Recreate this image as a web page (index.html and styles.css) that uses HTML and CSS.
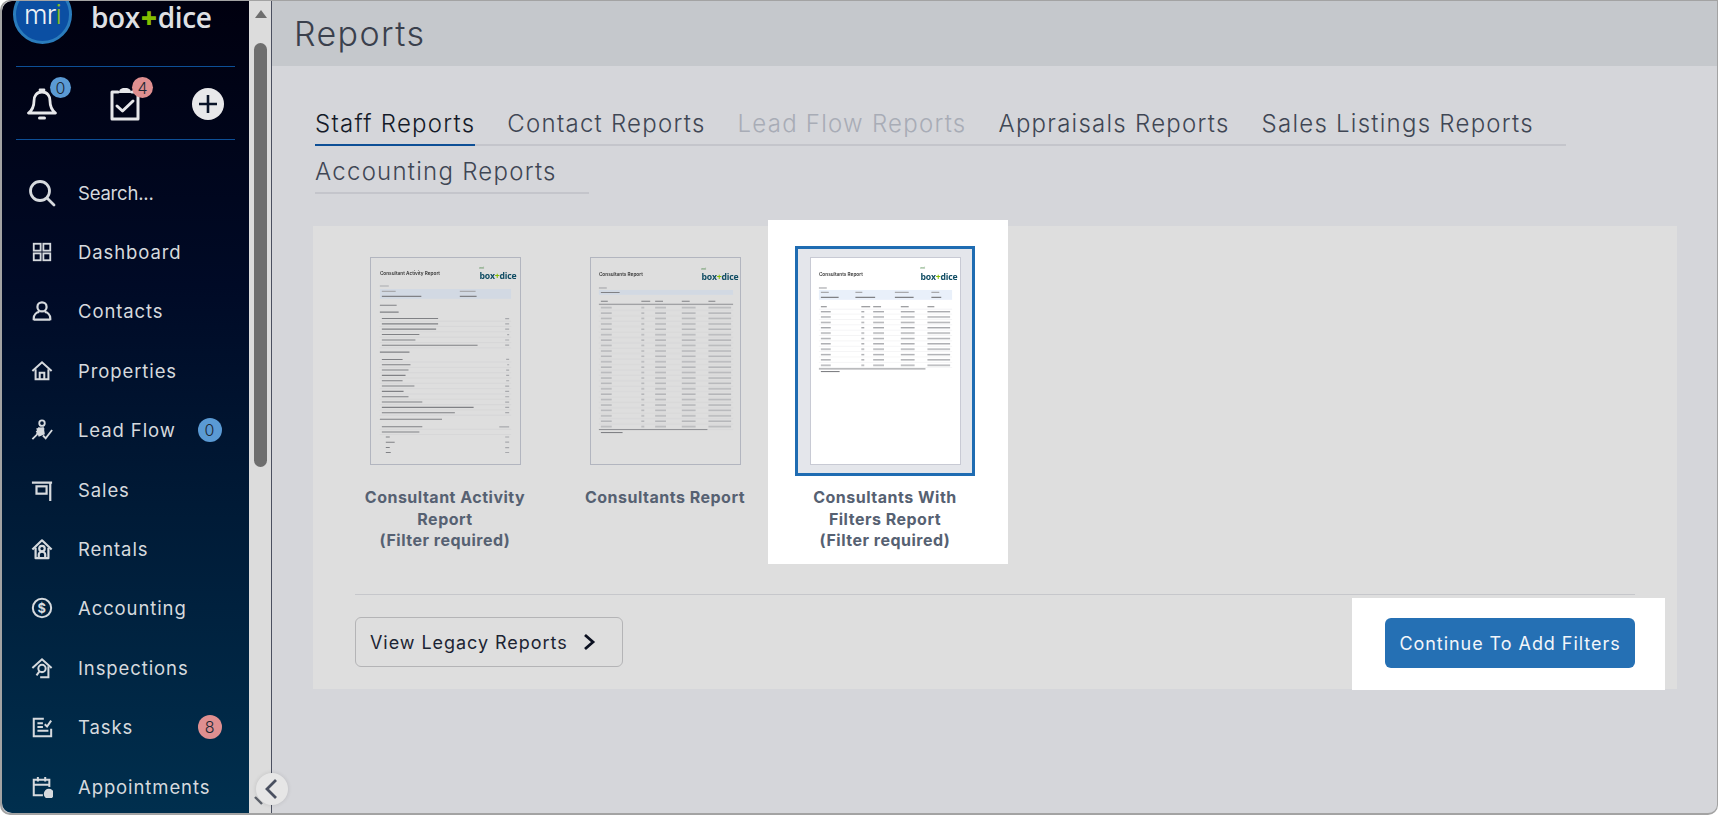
FILE: index.html
```html
<!DOCTYPE html>
<html lang="en">
<head>
    <meta charset="UTF-8">
    <title>Reports</title>
    <link rel="stylesheet" href="styles.css">
</head>
<body>
<div class="app">

    <aside class="sidebar">
        <div class="brand">
            <div class="brand-mark">m<span class="brand-r">r</span><span class="brand-i">i</span></div>
            <div class="brand-name">box<span class="plus">+</span>dice</div>
        </div>

        <div class="quick">
            <div class="quick-item">
                <svg class="quick-icon" viewBox="0 0 32 34" fill="none" stroke="currentColor" stroke-width="2.8" stroke-linejoin="round" stroke-linecap="round"><path d="M15 5c-5.500 0-8 4-8 9 0 6-1.500 9-5.500 12h27c-4-3-5.500-6-5.500-12 0-5-2.500-9-8-9z"/><path d="M13 3h4"/><path d="M12.500 31h5" stroke-width="3"/></svg>
                <span class="count blue quick-count">0</span>
            </div>
            <div class="quick-item">
                <svg class="quick-icon" viewBox="0 0 32 34" fill="none" stroke="currentColor" stroke-width="3" stroke-linejoin="round" stroke-linecap="round"><path d="M9 5H3v27h26V5h-6"/><path d="M10 6c0-5 4-5 6-5s6 0 6 5z" fill="currentColor" stroke="none"/><path d="M8 19l5.500 5L24 14"/></svg>
                <span class="count red quick-count">4</span>
            </div>
            <div class="add-circle">
                <svg viewBox="0 0 32 32" fill="none" stroke="#0a1428" stroke-width="2.600"><path d="M16 7v18M7 16h18"/></svg>
            </div>
        </div>

        <nav class="menu">
            <a class="menu-item search-item">
                <svg class="menu-icon search-icon" viewBox="0 0 28 28" fill="none" stroke="currentColor" stroke-width="2.800" stroke-linecap="round"><circle cx="12" cy="12" r="9.500"/><path d="M19 19l7 7"/></svg>
                Search...
            </a>
            <a class="menu-item">
                <svg class="menu-icon" viewBox="0 0 24 24" fill="none" stroke="currentColor" stroke-width="2"><rect x="3" y="3" width="7.500" height="7.500"/><rect x="13.500" y="3" width="7.500" height="7.500"/><rect x="3" y="13.500" width="7.500" height="7.500"/><rect x="13.500" y="13.500" width="7.500" height="7.500"/></svg>
                Dashboard
            </a>
            <a class="menu-item">
                <svg class="menu-icon" viewBox="0 0 24 24" fill="none" stroke="currentColor" stroke-width="2.400"><circle cx="12" cy="7.500" r="5"/><path d="M3 22v-2c0-4 3-6.500 6-7M21 22v-2c0-4-3-6.500-6-7M3 21.500h18"/></svg>
                Contacts
            </a>
            <a class="menu-item">
                <svg class="menu-icon" viewBox="0 0 24 24" fill="none" stroke="currentColor" stroke-width="2.200"><path d="M1.500 12L12 2.500 22.500 12"/><path d="M5 10v11h14V10"/><path d="M9.500 21v-7h5v7"/></svg>
                Properties
            </a>
            <a class="menu-item">
                <svg class="menu-icon" viewBox="0 0 24 24" fill="none" stroke="currentColor" stroke-width="2"><circle cx="12" cy="4.500" r="3"/><path d="M1.500 22l5-5 2-7 6 1M6 13l3 4 3-1M13 18l3 3 7-9" /><path d="M7 11l6-1 1 6-5 2z" fill="currentColor"/></svg>
                Lead Flow
                <span class="count blue">0</span>
            </a>
            <a class="menu-item">
                <svg class="menu-icon" viewBox="0 0 24 24" fill="none" stroke="currentColor" stroke-width="2.400"><path d="M1 4h22M21 4v20"/><rect x="6" y="8" width="11" height="8"/></svg>
                Sales
            </a>
            <a class="menu-item">
                <svg class="menu-icon" viewBox="0 0 24 24" fill="none" stroke="currentColor" stroke-width="2.400" stroke-linejoin="round"><path d="M1.500 12.500L12 2.500l10.500 10"/><path d="M5 10.500V22h14V10.500"/><circle cx="12" cy="11.500" r="3"/><path d="M8.500 22v-4c0-1.500 1.500-3 3.500-3s3.500 1.500 3.500 3v4"/></svg>
                Rentals
            </a>
            <a class="menu-item">
                <svg class="menu-icon" viewBox="0 0 24 24"><circle cx="12" cy="12" r="10" fill="none" stroke="currentColor" stroke-width="2.200"/><text class="dollar" x="12" y="17">$</text></svg>
                Accounting
            </a>
            <a class="menu-item">
                <svg class="menu-icon" viewBox="0 0 24 24" fill="none" stroke="currentColor" stroke-width="2.200"><path d="M1.500 12L12 2.500 22.500 12"/><path d="M19 10v12H10"/><circle cx="12" cy="12.500" r="4"/><path d="M9 16l-3 4"/></svg>
                Inspections
            </a>
            <a class="menu-item">
                <svg class="menu-icon" viewBox="0 0 24 24" fill="none" stroke="currentColor" stroke-width="2.200"><path d="M14 3H3v19h19v-8"/><path d="M7 8h6M7 12h6M7 16h12"/><path d="M15 9l2.500 2.500L22 5"/></svg>
                Tasks
                <span class="count red">8</span>
            </a>
            <a class="menu-item">
                <svg class="menu-icon" viewBox="0 0 24 24" fill="none" stroke="currentColor" stroke-width="2.200"><path d="M13 21H3V4h17v8M3 9.500h17M7.500 1v5M15.500 1v5"/><circle cx="19.500" cy="19.500" r="5.500" fill="currentColor" stroke="none"/></svg>
                Appointments
            </a>
        </nav>
    </aside>

    <div class="scrollbar">
        <div class="scroll-up"></div>
        <div class="scroll-thumb"></div>
    </div>

    <main class="main">
        <header class="page-header">
            <h1>Reports</h1>
        </header>

        <div class="tabs">
            <div class="tab active"><span>Staff Reports</span></div>
            <div class="tab"><span>Contact Reports</span></div>
            <div class="tab disabled"><span>Lead Flow Reports</span></div>
            <div class="tab"><span>Appraisals Reports</span></div>
            <div class="tab"><span>Sales Listings Reports</span></div>
            <div class="tab"><span>Accounting Reports</span></div>
        </div>

        <section class="panel">
            <div class="cards">
                <div class="card">
                    <div class="thumb-box">
                        <svg class="thumb" viewBox="0 0 151 208">
                            <text class="t-title" x="9" y="16.500">Consultant Activity Report</text>
                            <text class="t-mri" x="110" y="10.500">mri</text>
                            <text class="t-logo" x="110" y="21">box<tspan class="t-plus">+</tspan>dice</text>
                            <rect x="9" y="31" width="133" height="10" fill="#d2d9e3"/>
                            <path class="bars-soft" d="M9 28h9M11 33.500h14M90 33.500h16"/>
                            <path class="bars" d="M11 38.500h40M90 38.500h17M9 47.500h17M9 54.500h19M9 95h30M9 163h63"/>
                            <path class="bars" d="M11 61h57M11 66.400h57M11 71.700h55M11 77.200h38M11 82.700h34M11 88h97M11 102.400h21M11 107.800h29M11 113.200h27M11 118.600h24M11 124h21M11 129.400h33M11 134.800h22M11 140.200h27M11 145.600h41M11 151h93M11 156.400h74M11 170.700h41M11 176h38M15 181h4M15 186.300h9M15 191.700h4M15 196.700h5"/>
                            <path class="bars-soft" d="M136 61h4M136 66.400h4M136 71.700h4M138 77.200h2M136 82.700h4M136 88h4M137 102.400h3M138 107.800h2M137 113.200h3M137 118.600h3M137 124h3M136 129.400h4M136 134.800h4M136 140.200h4M136 145.600h4M136 151h4M136 156.400h4M130 170.700h10M136 181h4M136 186.300h4M136 191.700h4M136 196.700h4"/>
                            <path class="rules" d="M9 63.700h133M9 69h133M9 74.400h133M9 79.900h133M9 85.300h133M9 90.700h133M9 105h133M9 110.400h133M9 115.800h133M9 121.200h133M9 126.600h133M9 132h133M9 137.400h133M9 142.800h133M9 148.200h133M9 153.600h133M9 159h133M9 173.300h133M9 178.500h133"/>
                        </svg>
                    </div>
                    <div class="caption">Consultant Activity Report<br>(Filter required)</div>
                </div>

                <div class="card">
                    <div class="thumb-box">
                        <svg class="thumb" viewBox="0 0 151 208">
                            <defs>
                                <pattern id="rows-dim" width="151" height="5.480" patternUnits="userSpaceOnUse" y="48">
                                    <path class="bars-soft" d="M10 2h11M51 2h3M65 2h11M92 2h14M119 2h23"/>
                                    <path class="rules" d="M8 4.800h136"/>
                                </pattern>
                            </defs>
                            <text class="t-title" x="8" y="17.500">Consultants Report</text>
                            <text class="t-mri" x="112" y="11.500">mri</text>
                            <text class="t-logo" x="112" y="22">box<tspan class="t-plus">+</tspan>dice</text>
                            <path class="bars-soft" d="M8 30h8"/>
                            <rect x="8" y="32" width="136" height="5" fill="#d2d9e3"/>
                            <path class="bars" d="M10 34.500h19M10 43.400h7M51 43.400h9M65 43.400h8M92 43.400h8M119 43.400h7"/>
                            <path class="strong" d="M8 46.500h136"/>
                            <rect y="48" width="151" height="126" fill="url(#rows-dim)"/>
                            <path class="strong" d="M8 173.500h110"/>
                            <path class="bars" d="M10 176.500h22"/>
                        </svg>
                    </div>
                    <div class="caption">Consultants Report</div>
                </div>

                <div class="card selected">
                    <div class="thumb-box">
                        <svg class="thumb paper" viewBox="0 0 151 208">
                            <defs>
                                <pattern id="rows-lit" width="151" height="5.430" patternUnits="userSpaceOnUse" y="51.500">
                                    <path class="bars-soft" d="M10 2.500h10M51 2.500h3M63 2.500h11M91 2.500h14M118 2.500h23"/>
                                    <path class="rules-lit" d="M8 5h135"/>
                                </pattern>
                            </defs>
                            <text class="t-title" x="8" y="17.500">Consultants Report</text>
                            <text class="t-mri" x="111" y="11">mri</text>
                            <text class="t-logo" x="111" y="21.500">box<tspan class="t-plus">+</tspan>dice</text>
                            <path class="bars-soft" d="M8 30h8"/>
                            <rect x="8" y="32" width="135" height="10" fill="#e9f0fa"/>
                            <path class="bars-soft" d="M10 34.500h8M45 34.500h7M85 34.500h14M122 34.500h8"/>
                            <path class="bars" d="M10 39.500h18M45 39.500h20M85 39.500h19M122 39.500h10M10 49h6M51 49h9M63 49h8M91 49h8M118 49h7"/>
                            <path class="rules-lit" d="M8 51.500h135"/>
                            <rect y="51.500" width="151" height="60" fill="url(#rows-lit)"/>
                            <path class="strong" d="M8 112h108"/>
                            <path class="bars" d="M10 114.700h19"/>
                        </svg>
                    </div>
                    <div class="caption">Consultants With Filters Report<br>(Filter required)</div>
                </div>
            </div>

            <div class="panel-footer">
                <a class="btn btn-outline">
                    View Legacy Reports
                    <svg class="btn-chevron" viewBox="0 0 14 20" fill="none" stroke="#0b1020" stroke-width="2.800"><path d="M3 3l8 7-8 7"/></svg>
                </a>
                <div class="btn-spot">
                    <a class="btn btn-primary">Continue To Add Filters</a>
                </div>
            </div>
        </section>
    </main>

    <button class="collapse">
        <svg viewBox="0 0 32 32" fill="none" stroke="#4a5060" stroke-width="2.800"><path d="M20 7l-9 9 9 9"/><path class="collapse-tick" d="M-1 24l7 7"/></svg>
    </button>
</div>
</body>
</html>
```

FILE: styles.css
```css
* {
    margin: 0;
    padding: 0;
    box-sizing: border-box;
}

html, body {
    height: 100%;
    overflow: hidden;
}

body {
    font-family: Inter, "Noto Sans", sans-serif;
    background-color: #fff;
}

.app {
    position: relative;
    display: flex;
    height: 815px;
    border: solid #a3a3a3;
    border-width: 1px 1px 2px 2px;
    border-radius: 10px 0 10px 10px;
    overflow: hidden;
    background-color: #d5d6da;
}

/* Sidebar */
.sidebar {
    flex: 0 0 247px;
    height: 100%;
    overflow: hidden;
    color: #d9dcdf;
    background: linear-gradient(180deg, #00000f 0%, #000a26 35%, #001a36 62%, #002f4e 100%);
    border-radius: 10px 0 0 10px;
}

.brand {
    display: flex;
    align-items: center;
    height: 59px;
    margin-top: -16px;
    padding-left: 11px;
}

.brand-mark {
    display: flex;
    align-items: center;
    justify-content: center;
    width: 59px;
    height: 59px;
    border-radius: 50%;
    border: 3px solid #2a7cbc;
    background-color: #0b4fa3;
    color: #eef1f5;
    font-size: 27px;
    font-weight: 300;
    line-height: 28px;
    letter-spacing: -0.8px;
}

.brand-r, .brand-i {
    color: #eef1f5;
}

.brand-i {
    color: #86bc25;
}

.brand-name {
    margin-left: 19px;
    margin-top: 4px;
    font-family: "Open Sans", sans-serif;
    font-size: 28px;
    font-weight: 600;
    line-height: 28px;
    letter-spacing: -0.4px;
    color: #dfe0e4;
}

.plus {
    color: #84bd00;
    font-weight: 800;
    margin: 0 1px;
}

.quick {
    display: flex;
    align-items: center;
    height: 74px;
    margin: 22px 14px 0;
    padding: 2px 0 0 11px;
    border-top: 1px solid #0d4f96;
    border-bottom: 1px solid #0d4f96;
}

.quick-item {
    position: relative;
    color: #e6e7ea;
    width: 32px;
    height: 34px;
    margin-right: 50px;
}

.quick-icon {
    display: block;
    width: 32px;
    height: 34px;
}

.count {
    display: flex;
    align-items: center;
    justify-content: center;
    width: 24px;
    height: 24px;
    margin-left: auto;
    border-radius: 50%;
    color: #1e2733;
    font-size: 16px;
    font-weight: 300;
}

.count.blue {
    background-color: #5a9ad4;
}

.count.red {
    background-color: #df8f90;
}

.quick-count {
    position: absolute;
    top: -10px;
    right: -12px;
    width: 21px;
    height: 21px;
}

.add-circle {
    width: 32px;
    height: 32px;
    margin-left: 1px;
    border-radius: 50%;
    background-color: #e8e8ea;
}

.add-circle svg {
    display: block;
}

.menu {
    margin-top: 23px;
    padding: 0 27px 0 28px;
}

.menu-item {
    display: flex;
    align-items: center;
    height: 59.400px;
    font-size: 18.500px;
    letter-spacing: 0.9px;
    color: #d6dade;
}

.search-item {
    letter-spacing: -0.2px;
}

.menu-icon {
    flex: 0 0 auto;
    width: 22px;
    height: 22px;
    margin: 0 25px 0 1px;
}

.search-icon {
    width: 28px;
    height: 28px;
    margin: 0 22px 0 -2px;
}

.dollar {
    font-size: 14px;
    font-weight: 700;
    text-anchor: middle;
    fill: currentColor;
}

/* Scrollbar */
.scrollbar {
    flex: 0 0 22px;
    padding: 9px 4px 0 5px;
    background-color: #dcdcdc;
}

.scroll-up {
    width: 0;
    height: 0;
    margin: 0 auto;
    border-left: 6px solid transparent;
    border-right: 6px solid transparent;
    border-bottom: 8px solid #6e6e6e;
}

.scroll-thumb {
    width: 13px;
    height: 424px;
    margin-top: 25px;
    border-radius: 7px;
    background-color: #6e6e6e;
}

/* Main */
.main {
    flex: 1;
    min-width: 0;
    height: 100%;
    border-left: 1px solid #4b5060;
}

.page-header {
    height: 65px;
    padding-left: 22px;
    background-color: #c5c8cc;
}

.page-header h1 {
    font-size: 34px;
    font-weight: 300;
    line-height: 66px;
    letter-spacing: 1.400px;
    color: #3a404c;
}

.tabs {
    display: flex;
    flex-wrap: wrap;
    width: 1270px;
    margin: 32px 0 0 43px;
}

.tab {
    height: 48px;
    padding-right: 32px;
    border-bottom: 2px solid #c4c5cb;
    font-size: 24px;
    font-weight: 300;
    line-height: 52px;
    letter-spacing: 1.250px;
    color: #3f4654;
    white-space: nowrap;
}

.tab span {
    display: block;
    height: 48px;
}

.tab.active {
    color: #141a28;
}

.tab.active span {
    border-bottom: 2px solid #0d4f96;
}

.tab.disabled {
    color: #a8acb6;
}

/* Report panel */
.panel {
    width: 1364px;
    height: 463px;
    margin: 32px 0 0 41px;
    padding: 20px 42px 0;
    background-color: #dedede;
}

.cards {
    display: flex;
    align-items: flex-start;
    gap: 40px;
    height: 318px;
}

.card {
    width: 180px;
}

.card.selected {
    box-sizing: content-box;
    margin: -26px -33px 0 -27px;
    padding: 26px 33px 12px 27px;
    background-color: #fff;
}

.thumb-box {
    display: flex;
    align-items: center;
    justify-content: center;
    height: 230px;
    border: 3px solid transparent;
}

.selected .thumb-box {
    border-color: #1f6cb2;
    background-color: #e4e6eb;
}

.thumb {
    display: block;
    width: 151px;
    height: 208px;
    border: 1px solid #b2b5bf;
    filter: blur(0.5px);
}

.thumb.paper {
    background-color: #fff;
    border-color: #c8cad4;
}

.t-title {
    font-size: 4.800px;
    font-weight: 600;
    fill: #333;
}

.t-mri {
    font-size: 3.200px;
    fill: #3d7f3a;
}

.t-logo {
    font-family: "Open Sans", sans-serif;
    font-size: 8.800px;
    font-weight: 700;
    letter-spacing: -0.2px;
    fill: #0f4c63;
}

.t-plus {
    fill: #84bd00;
}

.bars, .bars-soft, .rules, .rules-lit, .strong {
    fill: none;
}

.bars {
    stroke: #808185;
    stroke-width: 1.100;
}

.bars-soft {
    stroke: #a8a9ad;
    stroke-width: 1.200;
}

.rules {
    stroke: #d0d1d3;
    stroke-width: 0.500;
}

.rules-lit {
    stroke: #e9e9ec;
    stroke-width: 0.500;
}

.strong {
    stroke: #8b8c90;
    stroke-width: 1;
}

.caption {
    margin-top: 11px;
    font-size: 16px;
    font-weight: 700;
    line-height: 21.700px;
    letter-spacing: 0.500px;
    text-align: center;
    color: #566172;
}

.panel-footer {
    display: flex;
    align-items: flex-start;
    justify-content: space-between;
    margin-top: 30px;
    padding-top: 22px;
    height: 95px;
    border-top: 1px solid #c6c7cb;
}

.btn {
    display: flex;
    align-items: center;
    justify-content: center;
    height: 50px;
    border-radius: 6px;
    font-size: 18px;
    letter-spacing: 0.950px;
}

.btn-outline {
    width: 268px;
    padding-left: 14px;
    justify-content: flex-start;
    border: 1px solid #b4b4b6;
    color: #1c2433;
}

.btn-chevron {
    width: 14px;
    height: 20px;
    margin-left: 14px;
}

.btn-spot {
    margin: -19px -30px 0 0;
    padding: 20px 30px 22px 33px;
    background-color: #fff;
}

.btn-primary {
    width: 250px;
    background-color: #2570b4;
    color: #f2f6fa;
}

/* Collapse toggle, sits on top of the sidebar edge */
.collapse {
    position: absolute;
    left: 254px;
    top: 772px;
    width: 32px;
    height: 32px;
    border: none;
    border-radius: 50%;
    background-color: #e6e6e6;
    box-shadow: 0 0 4px rgba(0, 0, 0, 0.12);
}

.collapse svg {
    display: block;
    overflow: visible;
}

.collapse-tick {
    stroke: #5a5f68;
    stroke-width: 2.400;
}
```
